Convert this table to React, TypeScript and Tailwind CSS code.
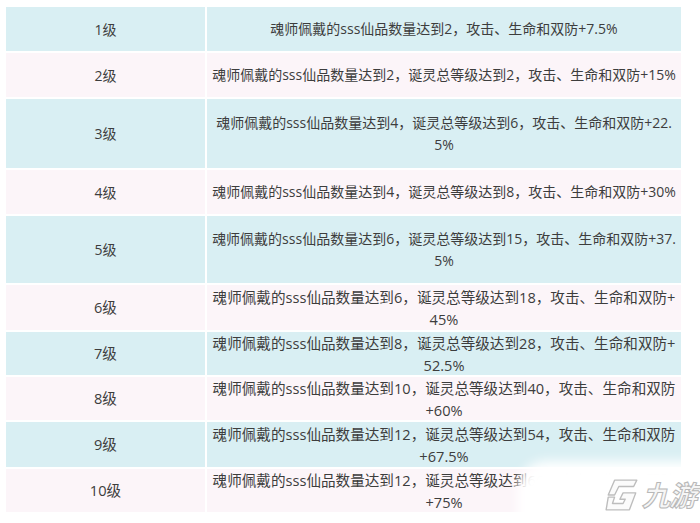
const rows: { level: string; lines: string[]; h: string; alt: boolean; big?: boolean }[] = [
  { level: '1级', lines: ['魂师佩戴的sss仙品数量达到2，攻击、生命和双防+7.5%'], h: 'h-[44px]', alt: false },
  { level: '2级', lines: ['魂师佩戴的sss仙品数量达到2，诞灵总等级达到2，攻击、生命和双防+15%'], h: 'h-[44px]', alt: true },
  { level: '3级', lines: ['魂师佩戴的sss仙品数量达到4，诞灵总等级达到6，攻击、生命和双防+22.', '5%'], h: 'h-[69px]', alt: false },
  { level: '4级', lines: ['魂师佩戴的sss仙品数量达到4，诞灵总等级达到8，攻击、生命和双防+30%'], h: 'h-[44px]', alt: true },
  { level: '5级', lines: ['魂师佩戴的sss仙品数量达到6，诞灵总等级达到15，攻击、生命和双防+37.', '5%'], h: 'h-[67px]', alt: false },
  { level: '6级', lines: ['魂师佩戴的sss仙品数量达到6，诞灵总等级达到18，攻击、生命和双防+', '45%'], h: 'h-[45px]', alt: true, big: true },
  { level: '7级', lines: ['魂师佩戴的sss仙品数量达到8，诞灵总等级达到28，攻击、生命和双防+', '52.5%'], h: 'h-[43px]', alt: false, big: true },
  { level: '8级', lines: ['魂师佩戴的sss仙品数量达到10，诞灵总等级达到40，攻击、生命和双防', '+60%'], h: 'h-[43px]', alt: true, big: true },
  { level: '9级', lines: ['魂师佩戴的sss仙品数量达到12，诞灵总等级达到54，攻击、生命和双防', '+67.5%'], h: 'h-[45px]', alt: false, big: true },
  { level: '10级', lines: ['魂师佩戴的sss仙品数量达到12，诞灵总等级达到66，攻击、生命和双防', '+75%'], h: 'h-[43px]', alt: true, big: true },
];

export default function App() {
  return (
    <div className="relative w-[700px] h-[523px] overflow-hidden bg-white pl-[6px] pt-[7px] font-['Open_Sans','Noto_Sans_CJK_SC',sans-serif] text-[14px] text-[#3d3d3d]">
      <div className="flex flex-col gap-[2px] w-[675px]">
        {rows.map((row) => {
          const bg = row.alt ? 'bg-[#fcf5f9]' : 'bg-[#d9eff3]';
          return (
            <div key={row.level} className={`flex gap-[2px] ${row.h}`}>
              <div className={`w-[199px] flex items-center justify-center ${bg} ${row.big ? 'text-[14.6px]' : ''}`}>
                {row.level}
              </div>
              <div
                className={`flex-1 flex flex-col items-center justify-center leading-[22px] ${bg} ${
                  row.big ? 'text-[14.6px] leading-[21px]' : ''
                }`}
              >
                {row.lines.map((line) => (
                  <span key={line} className="whitespace-nowrap">
                    {line}
                  </span>
                ))}
              </div>
            </div>
          );
        })}
      </div>

      {/* 水印 */}
      <div className="absolute left-[517px] top-[461px] w-[220px] h-[90px] rounded-[30px] bg-white blur-[6px]" />
      <div className="absolute left-[604px] top-[477px] flex items-center gap-[2px]">
        <svg width="36" height="36" viewBox="0 0 34 34" fill="none" stroke="#bdbdbd" strokeWidth="1.3" strokeLinejoin="round">
          <path d="M10 3 L31 3 L28 9 L14 9 L10 17 L4 17 Z" fill="#fbfbfb" />
          <path d="M4 19 L10 19 L8 25 L18 25 L20 21 L15 21 L18 15 L30 15 L24 31 L2 31 Z" fill="#fbfbfb" />
        </svg>
        <span className="text-[28px] leading-none italic font-bold text-[#f6f6f6] [-webkit-text-stroke:1px_#b8b8b8] tracking-[-1px]">
          九游
        </span>
      </div>
    </div>
  );
}
